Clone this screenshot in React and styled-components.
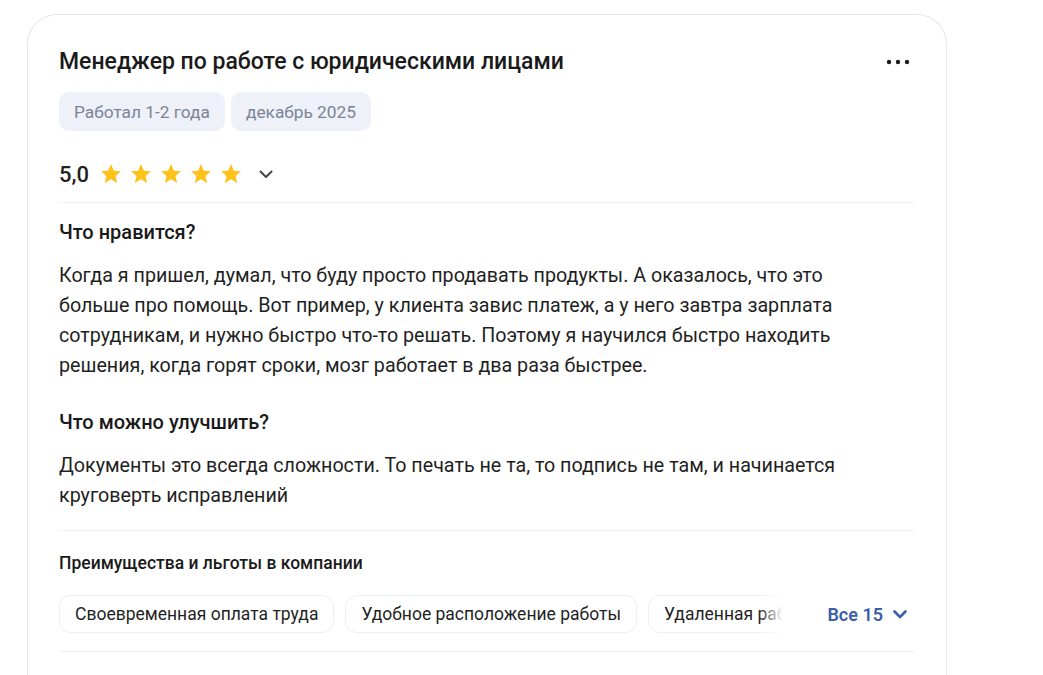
import React from "react";
import styled, { createGlobalStyle } from "styled-components";

const review = {
  title: "Менеджер по работе с юридическими лицами",
  tags: ["Работал 1-2 года", "декабрь 2025"],
  rating: "5,0",
  stars: 5,
  sections: [
    {
      heading: "Что нравится?",
      text:
        "Когда я пришел, думал, что буду просто продавать продукты. А оказалось, что это больше про помощь. Вот пример, у клиента завис платеж, а у него завтра зарплата сотрудникам, и нужно быстро что-то решать. Поэтому я научился быстро находить решения, когда горят сроки, мозг работает в два раза быстрее.",
    },
    {
      heading: "Что можно улучшить?",
      text:
        "Документы это всегда сложности. То печать не та, то подпись не там, и начинается круговерть исправлений",
    },
  ],
  benefits: [
    "Своевременная оплата труда",
    "Удобное расположение работы",
    "Удаленная работа",
  ],
  benefitsTotal: 15,
};

const Star = () => (
  <svg width="24" height="24" viewBox="0 0 24 24">
    <path
      fill="#ffc21a"
      d="M12 17.27L18.18 21l-1.64-7.03L22 9.24l-7.19-.61L12 2 9.19 8.63 2 9.24l5.46 4.73L5.82 21z"
    />
  </svg>
);

const Chevron = ({ color = "#444", width = 2 }) => (
  <svg width="24" height="24" viewBox="0 0 24 24" fill="none">
    <path
      d="M6.5 9.5l5.5 5.5 5.5-5.5"
      stroke={color}
      strokeWidth={width}
      strokeLinecap="round"
      strokeLinejoin="round"
    />
  </svg>
);

const Dots = () => (
  <svg width="26" height="24" viewBox="0 0 26 24">
    <circle cx="3" cy="12" r="2.2" fill="#1c1c1c" />
    <circle cx="12" cy="12" r="2.2" fill="#1c1c1c" />
    <circle cx="21" cy="12" r="2.2" fill="#1c1c1c" />
  </svg>
);

const App = () => (
  <>
    <GlobalStyle />
    <Card>
      <Header>
        <Title>{review.title}</Title>
        <MoreButton aria-label="Ещё">
          <Dots />
        </MoreButton>
      </Header>

      <Tags>
        {review.tags.map((t) => (
          <Tag key={t}>{t}</Tag>
        ))}
      </Tags>

      <RatingRow>
        <Score>{review.rating}</Score>
        <Stars>
          {Array.from({ length: review.stars }).map((_, i) => (
            <Star key={i} />
          ))}
        </Stars>
        <Toggle>
          <Chevron />
        </Toggle>
      </RatingRow>

      <Body>
        {review.sections.map((s) => (
          <Section key={s.heading}>
            <Heading>{s.heading}</Heading>
            <Text>{s.text}</Text>
          </Section>
        ))}
      </Body>

      <Benefits>
        <SubHeading>Преимущества и льготы в компании</SubHeading>
        <ChipsRow>
          <ChipsScroll>
            {review.benefits.map((b) => (
              <Chip key={b}>{b}</Chip>
            ))}
            <Fade />
          </ChipsScroll>
          <AllButton>
            Все {review.benefitsTotal}
            <Chevron color="#3b5ea6" width={2.6} />
          </AllButton>
        </ChipsRow>
      </Benefits>
    </Card>
  </>
);

export default App;

const GlobalStyle = createGlobalStyle`
  body {
    margin: 0;
    background: #fff;
    font-family: Roboto, "Noto Sans", sans-serif;
    color: #1f1f1f;
  }
`;

const Card = styled.div`
  box-sizing: border-box;
  width: 920px;
  margin: 14px 0 0 27px;
  padding: 32px 31px 0;
  border: 1px solid #e3e7ee;
  border-bottom: none;
  border-radius: 30px 30px 0 0;
  min-height: 700px;
`;

const Header = styled.div`
  display: flex;
  align-items: center;
  justify-content: space-between;
`;

const Title = styled.h2`
  margin: 0;
  font-size: 23px;
  line-height: 30px;
  font-weight: 500;
  color: #1a1a1a;
`;

const MoreButton = styled.button`
  display: flex;
  padding: 0;
  margin-right: 3px;
  border: none;
  background: none;
  cursor: pointer;
`;

const Tags = styled.div`
  display: flex;
  gap: 6px;
  margin-top: 15px;
`;

const Tag = styled.span`
  display: inline-flex;
  align-items: center;
  height: 39px;
  padding: 0 15px;
  border-radius: 10px;
  background: #eef1f7;
  color: #7b8496;
  font-size: 17.3px;
`;

const RatingRow = styled.div`
  display: flex;
  align-items: center;
  height: 40px;
  margin-top: 23px;
  padding-bottom: 8px;
  border-bottom: 1px solid #eff1f4;
`;

const Score = styled.span`
  font-size: 22px;
  font-weight: 500;
  margin-right: 10px;
`;

const Stars = styled.div`
  display: flex;
  gap: 6px;
`;

const Toggle = styled.button`
  display: flex;
  padding: 0;
  margin-left: 11px;
  border: none;
  background: none;
  cursor: pointer;
`;

const Body = styled.div`
  display: flex;
  flex-direction: column;
  gap: 28px;
  padding: 16px 0 19px;
  border-bottom: 1px solid #eff1f4;
`;

const Section = styled.section`
  display: flex;
  flex-direction: column;
  gap: 16px;
`;

const Heading = styled.h3`
  margin: 0;
  font-size: 20px;
  line-height: 26px;
  font-weight: 500;
  color: #1a1a1a;
`;

const Text = styled.p`
  max-width: 820px;
  margin: 0;
  font-size: 19.7px;
  line-height: 30px;
  color: #1f1f1f;
`;

const Benefits = styled.div`
  padding: 21px 0 18px;
  border-bottom: 1px solid #eff1f4;
`;

const SubHeading = styled.h4`
  margin: 0;
  font-size: 17.5px;
  line-height: 22px;
  font-weight: 500;
  color: #1a1a1a;
`;

const ChipsRow = styled.div`
  display: flex;
  align-items: center;
  margin-top: 21px;
`;

const ChipsScroll = styled.div`
  position: relative;
  flex: 1;
  display: flex;
  gap: 11px;
  overflow: hidden;
  white-space: nowrap;
`;

const Chip = styled.span`
  flex-shrink: 0;
  display: inline-flex;
  align-items: center;
  box-sizing: border-box;
  height: 38px;
  padding: 0 15px;
  border: 1px solid #eceff3;
  border-radius: 12px;
  font-size: 17.5px;
  color: #1f1f1f;
`;

const Fade = styled.div`
  position: absolute;
  top: 0;
  right: 0;
  bottom: 0;
  width: 28px;
  background: linear-gradient(to right, rgba(255, 255, 255, 0), #fff 85%);
`;

const AllButton = styled.button`
  display: flex;
  align-items: center;
  gap: 5px;
  margin-left: 40px;
  padding: 0 3px 0 0;
  border: none;
  background: none;
  font-family: inherit;
  font-size: 18px;
  font-weight: 600;
  color: #3b5ea6;
  cursor: pointer;
`;
